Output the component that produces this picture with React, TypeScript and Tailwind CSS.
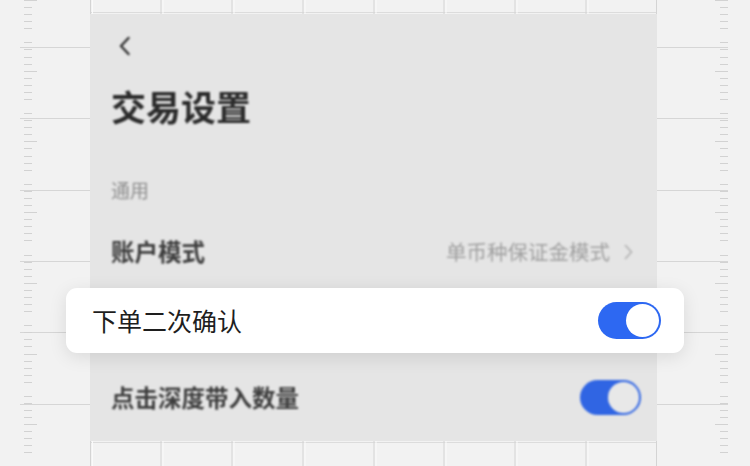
import React from 'react';

const font = { fontFamily: '"Noto Sans CJK SC", "Noto Sans", sans-serif' };

const gridRows = [47, 118, 190, 261, 332, 404];
const gridCols = [0.5, 71, 142, 213, 284, 354, 425, 496, 566.5];
const ticks = Array.from({ length: 67 }, (_, k) => k).filter((k) => k % 10 !== 5);

const Ruler = ({ side }: { side: 'left' | 'right' }) => {
  const w = side === 'left' ? 90 : 93;
  const lineX1 = side === 'left' ? 20 : 0;
  const lineX2 = side === 'left' ? 90 : 71;
  return (
    <svg width={w} height={466} className="shrink-0">
      {gridRows.map((y) => (
        <line key={y} x1={lineX1} x2={lineX2} y1={y + 0.5} y2={y + 0.5} stroke="#d6d6d6" strokeWidth={1} />
      ))}
      {ticks.map((k) => {
        const y = Math.round(k * 7.07) + 0.5;
        const long = k % 10 === 0;
        const x1 = side === 'left' ? 24 : long ? 58 : 63;
        const x2 = side === 'left' ? (long ? 37 : 32) : 71;
        return <line key={k} x1={x1} x2={x2} y1={y} y2={y} stroke="#d2d2d2" strokeWidth={1} />;
      })}
    </svg>
  );
};

const Strip = ({ h, lineY }: { h: number; lineY: number }) => (
  <svg width={567} height={h} className="block">
    <line x1={0} x2={567} y1={lineY} y2={lineY} stroke="#dcdcdc" strokeWidth={1} />
    {gridCols.map((x) => (
      <g key={x}>
        <line x1={x} x2={x} y1={0} y2={h} stroke="#d4d4d4" strokeWidth={1} />
        <line x1={x + 2} x2={x + 2} y1={0} y2={h} stroke="#fafafa" strokeWidth={1} />
      </g>
    ))}
  </svg>
);

const Toggle = ({ track, knob, w, h }: { track: string; knob: string; w: string; h: string }) => (
  <div className={`flex items-center justify-end rounded-full p-[2px] ${track} ${w} ${h}`}>
    <div className={`h-full aspect-square rounded-full ${knob}`} />
  </div>
);

export default function App() {
  return (
    <div className="relative w-[750px] h-[466px] overflow-hidden bg-[#f2f2f2] flex" style={font}>
      <Ruler side="left" />

      <div className="flex flex-col w-[567px] shrink-0">
        <Strip h={14} lineY={12.5} />
        <div className="h-[427px] bg-[#e5e5e5] overflow-hidden">
          <div className="blur-[0.9px] pl-[21px] pr-[16px] pt-[22px] flex flex-col">
            <svg width="16" height="20" viewBox="0 0 16 20" className="ml-[6px]">
              <path d="M11.5 2 L4 10 L11.5 18" fill="none" stroke="#333" strokeWidth="2.5" strokeLinecap="round" strokeLinejoin="round" />
            </svg>
            <div className="mt-[32px] text-[35px] leading-[35px] font-bold text-[#2a2a2a]">交易设置</div>
            <div className="mt-[57px] text-[19px] leading-[20px] text-[#8e8e8e]">通用</div>
            <div className="mt-[15px] h-[73px] flex items-center justify-between">
              <span className="text-[23.5px] font-semibold text-[#3d3d3d]">账户模式</span>
              <span className="flex items-center gap-[14px] mr-[8px] text-[20.5px] text-[#a0a0a0]">
                单币种保证金模式
                <svg width="9" height="16" viewBox="0 0 9 16">
                  <path d="M1.5 1.5 L7.5 8 L1.5 14.5" fill="none" stroke="#b0b0b0" strokeWidth="1.6" strokeLinecap="round" strokeLinejoin="round" />
                </svg>
              </span>
            </div>
            <div className="h-[73px] flex items-center justify-end">
              <Toggle track="bg-[#3065e3]" knob="bg-[#e8e8e8]" w="w-[61px]" h="h-[35px]" />
            </div>
            <div className="h-[73px] flex items-center justify-between">
              <span className="text-[23.5px] font-semibold text-[#3d3d3d]">点击深度带入数量</span>
              <Toggle track="bg-[#3065e3]" knob="bg-[#e8e8e8]" w="w-[61px]" h="h-[35px]" />
            </div>
          </div>
        </div>
        <Strip h={25} lineY={1.5} />
      </div>

      <Ruler side="right" />

      <div className="absolute left-[66px] top-[288px] w-[618px] h-[65px] bg-white rounded-[11px] shadow-[0_4px_18px_rgba(0,0,0,0.10)] flex items-center justify-between pl-[26px] pr-[23px]">
        <span className="text-[25px] text-[#1e1e1e]">下单二次确认</span>
        <Toggle track="bg-[#2d68f2]" knob="bg-white" w="w-[63px]" h="h-[37px]" />
      </div>
    </div>
  );
}
